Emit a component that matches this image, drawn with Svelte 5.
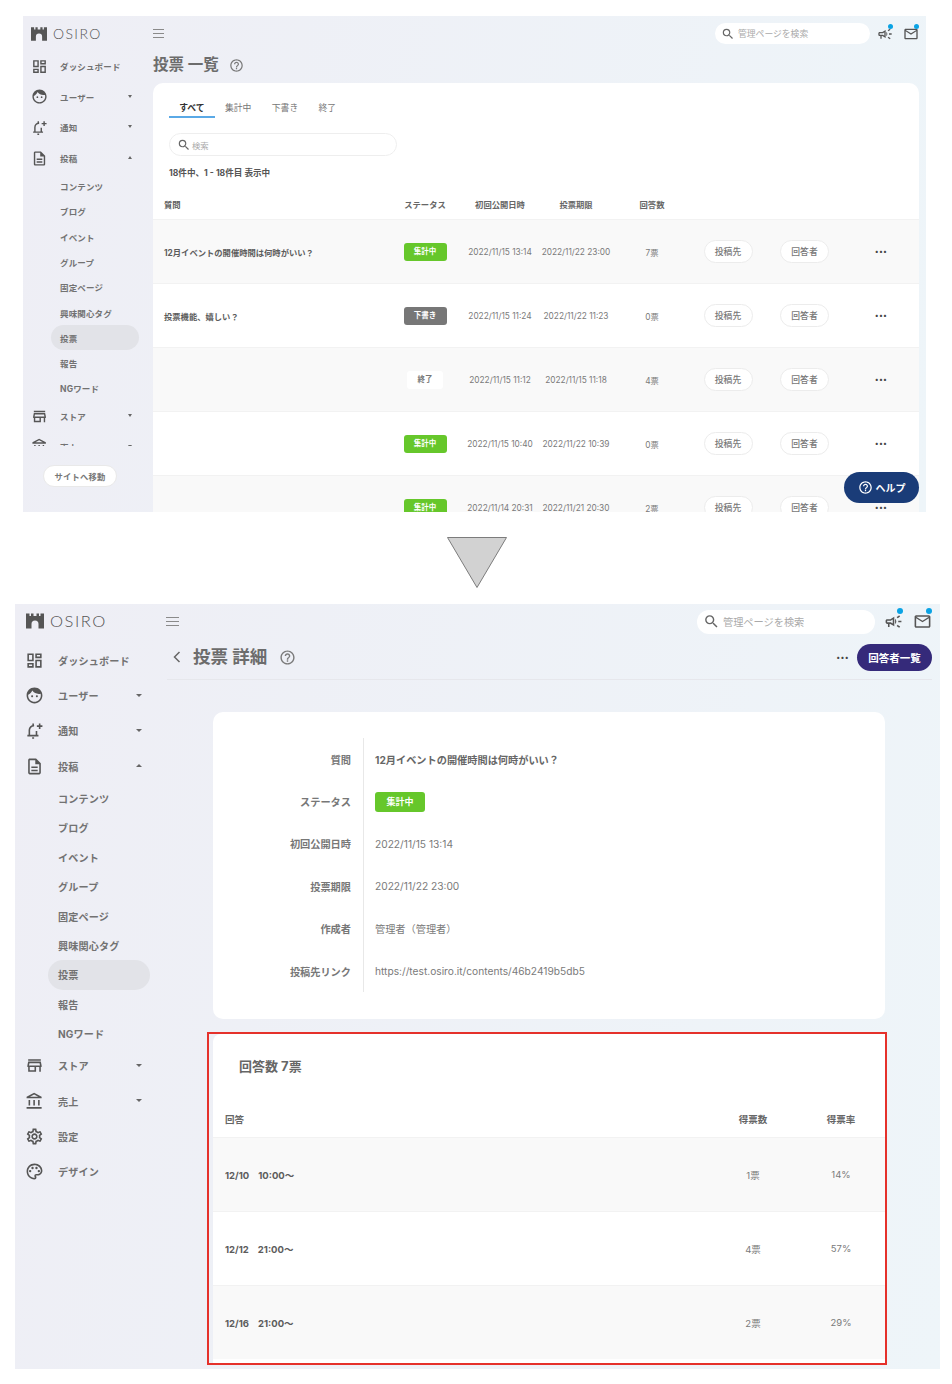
<script lang="ts">
  const paths: Record<string, string> = {
    dashboard: "M19 5v2h-4V5h4M9 5v6H5V5h4m10 8v6h-4v-6h4M9 17v2H5v-2h4M21 3h-8v6h8V3zM11 3H3v10h8V3zm10 8h-8v10h8V11zm-10 4H3v6h8v-6z",
    face: "M9 11.75c-.69 0-1.25.56-1.25 1.25s.56 1.25 1.25 1.25 1.25-.56 1.25-1.25-.56-1.25-1.25-1.25zm6 0c-.69 0-1.25.56-1.25 1.25s.56 1.25 1.25 1.25 1.25-.56 1.25-1.25-.56-1.25-1.25-1.25zM12 2C6.48 2 2 6.48 2 12s4.48 10 10 10 10-4.48 10-10S17.52 2 12 2zm0 18c-4.41 0-8-3.59-8-8 0-.29.02-.58.05-.86 2.36-1.05 4.23-2.98 5.21-5.37C11.07 8.33 14.05 10 17.42 10c.78 0 1.53-.09 2.25-.26.21.71.33 1.47.33 2.26 0 4.41-3.59 8-8 8z",
    doc: "M8 16h8v2H8zm0-4h8v2H8zm6-10H6c-1.1 0-2 .9-2 2v16c0 1.1.89 2 1.99 2H18c1.1 0 2-.9 2-2V8l-6-6zm4 18H6V4h7v5h5v11z",
    store: "M20 4H4v2h16V4zm1 10v-2l-1-5H4l-1 5v2h1v6h10v-6h4v6h2v-6h1zm-9 4H6v-4h6v4zm-6.96-6l.6-3h12.72l.6 3H5.04z",
    bank: "M6.5 10h-2v7h2v-7zm6 0h-2v7h2v-7zm8.5 9H2v2h19v-2zm-2.5-9h-2v7h2v-7zm-7-6.74L16.71 6H6.29l5.21-2.74m0-2.26L2 6v2h19V6l-9.5-5z",
    gear: "M19.43 12.98c.04-.32.07-.64.07-.98 0-.34-.03-.66-.07-.98l2.11-1.65c.19-.15.24-.42.12-.64l-2-3.46c-.09-.16-.26-.25-.44-.25-.06 0-.12.01-.17.03l-2.49 1c-.52-.4-1.08-.73-1.69-.98l-.38-2.65C14.46 2.18 14.25 2 14 2h-4c-.25 0-.46.18-.49.42l-.38 2.65c-.61.25-1.17.59-1.69.98l-2.49-1c-.06-.02-.12-.03-.18-.03-.17 0-.34.09-.43.25l-2 3.46c-.13.22-.07.49.12.64l2.11 1.65c-.04.32-.07.65-.07.98 0 .33.03.66.07.98l-2.11 1.65c-.19.15-.24.42-.12.64l2 3.46c.09.16.26.25.44.25.06 0 .12-.01.17-.03l2.49-1c.52.4 1.08.73 1.69.98l.38 2.65c.03.24.24.42.49.42h4c.25 0 .46-.18.49-.42l.38-2.65c.61-.25 1.17-.59 1.69-.98l2.49 1c.06.02.12.03.18.03.17 0 .34-.09.43-.25l2-3.46c.12-.22.07-.49-.12-.64l-2.11-1.65zm-1.98-1.71c.04.31.05.52.05.73 0 .21-.02.43-.05.73l-.14 1.13.89.7 1.08.84-.7 1.21-1.27-.51-1.04-.42-.9.68c-.43.32-.84.56-1.25.73l-1.06.43-.16 1.13-.2 1.35h-1.4l-.19-1.35-.16-1.13-1.06-.43c-.43-.18-.83-.41-1.23-.71l-.91-.7-1.06.43-1.27.51-.7-1.21 1.08-.84.89-.7-.14-1.13c-.03-.31-.05-.54-.05-.74s.02-.43.05-.73l.14-1.13-.89-.7-1.08-.84.7-1.21 1.27.51 1.04.42.9-.68c.43-.32.84-.56 1.25-.73l1.06-.43.16-1.13.2-1.35h1.39l.19 1.35.16 1.13 1.06.43c.43.18.83.41 1.23.71l.91.7 1.06-.43 1.27-.51.7 1.21-1.07.85-.89.7.14 1.13zM12 8c-2.21 0-4 1.79-4 4s1.79 4 4 4 4-1.79 4-4-1.79-4-4-4zm0 6c-1.1 0-2-.9-2-2s.9-2 2-2 2 .9 2 2-.9 2-2 2z",
    palette: "M12 22C6.49 22 2 17.51 2 12S6.49 2 12 2s10 4.04 10 9c0 3.31-2.69 6-6 6h-1.77c-.28 0-.5.22-.5.5 0 .12.05.23.13.33.41.47.64 1.06.64 1.67A2.5 2.5 0 0 1 12 22zm0-18c-4.41 0-8 3.59-8 8s3.59 8 8 8c.28 0 .5-.22.5-.5a.54.54 0 0 0-.14-.35c-.41-.46-.63-1.05-.63-1.65a2.5 2.5 0 0 1 2.5-2.5H16c2.21 0 4-1.79 4-4 0-3.86-3.59-7-8-7zM6.5 10a1.5 1.5 0 1 0 0 3 1.5 1.5 0 0 0 0-3zm3-4a1.5 1.5 0 1 0 0 3 1.5 1.5 0 0 0 0-3zm5 0a1.5 1.5 0 1 0 0 3 1.5 1.5 0 0 0 0-3zm3 4a1.5 1.5 0 1 0 0 3 1.5 1.5 0 0 0 0-3z",
    campaign: "M18 11v2h4v-2h-4zm-2 6.61c.96.71 2.21 1.65 3.2 2.39.4-.53.8-1.07 1.2-1.6-.99-.74-2.24-1.68-3.2-2.4-.4.54-.8 1.08-1.2 1.61zM20.4 5.6c-.4-.53-.8-1.07-1.2-1.6-.99.74-2.24 1.68-3.2 2.4.4.53.8 1.07 1.2 1.6.96-.72 2.21-1.65 3.2-2.4zM4 9c-1.1 0-2 .9-2 2v2c0 1.1.9 2 2 2h1v4h2v-4h1l5 3V6L8 9H4zm5.03 1.71L11 9.53v4.94l-1.97-1.18-.48-.29H4v-2h4.55l.48-.29zM15.5 12c0-1.33-.58-2.53-1.5-3.35v6.69c.92-.81 1.5-2.01 1.5-3.34z",
    mail: "M20 4H4c-1.1 0-1.99.9-1.99 2L2 18c0 1.1.9 2 2 2h16c1.1 0 2-.9 2-2V6c0-1.1-.9-2-2-2zm0 14H4V8l8 5 8-5v10zm-8-7L4 6h16l-8 5z",
    help: "M11 18h2v-2h-2v2zm1-16C6.48 2 2 6.48 2 12s4.48 10 10 10 10-4.48 10-10S17.52 2 12 2zm0 18c-4.41 0-8-3.59-8-8s3.59-8 8-8 8 3.59 8 8-3.59 8-8 8zm0-14c-2.21 0-4 1.79-4 4h2c0-1.1.9-2 2-2s2 .9 2 2c0 2-3 1.75-3 5h2c0-2.25 3-2.5 3-5 0-2.21-1.79-4-4-4z",
    search: "M15.5 14h-.79l-.28-.27A6.47 6.47 0 0 0 16 9.5 6.5 6.5 0 1 0 9.5 16c1.61 0 3.09-.59 4.23-1.57l.27.28v.79l5 4.99L20.49 19l-4.99-5zm-6 0C7.01 14 5 11.99 5 9.5S7.01 5 9.5 5 14 7.01 14 9.5 11.99 14 9.5 14z",
  };

  const mainTop = [
    { icon: "dashboard", label: "ダッシュボード" },
    { icon: "face", label: "ユーザー", caret: "down" },
    { icon: "bell", label: "通知", caret: "down" },
    { icon: "doc", label: "投稿", caret: "up" },
  ];
  const subs = ["コンテンツ", "ブログ", "イベント", "グループ", "固定ページ", "興味関心タグ", "投票", "報告", "NGワード"];
  const mainBottom = [
    { icon: "store", label: "ストア", caret: "down" },
    { icon: "bank", label: "売上", caret: "down" },
    { icon: "gear", label: "設定" },
    { icon: "palette", label: "デザイン" },
  ];

  const votes = [
    { q: "12月イベントの開催時間は何時がいい？", status: "集計中", kind: "live", from: "2022/11/15 13:14", to: "2022/11/22 23:00", n: "7票" },
    { q: "投票機能、嬉しい？", status: "下書き", kind: "draft", from: "2022/11/15 11:24", to: "2022/11/22 11:23", n: "0票" },
    { q: "", status: "終了", kind: "done", from: "2022/11/15 11:12", to: "2022/11/15 11:18", n: "4票" },
    { q: "", status: "集計中", kind: "live", from: "2022/11/15 10:40", to: "2022/11/22 10:39", n: "0票" },
    { q: "", status: "集計中", kind: "live", from: "2022/11/14 20:31", to: "2022/11/21 20:30", n: "2票" },
  ];

  const details = [
    { label: "ステータス", badge: true },
    { label: "初回公開日時", value: "2022/11/15 13:14" },
    { label: "投票期限", value: "2022/11/22 23:00" },
    { label: "作成者", value: "管理者（管理者）" },
    { label: "投稿先リンク", value: "https://test.osiro.it/contents/46b2419b5db5" },
  ];

  const answers = [
    { label: "12/10\u00a0\u00a0\u00a0\u00a010:00〜", n: "1票", rate: "14%" },
    { label: "12/12\u00a0\u00a0\u00a0\u00a021:00〜", n: "4票", rate: "57%" },
    { label: "12/16\u00a0\u00a0\u00a0\u00a021:00〜", n: "2票", rate: "29%" },
  ];
</script>

{#snippet icon(name, cls = "ico")}
  {#if name === "bell"}
    <svg class={cls} viewBox="0 0 24 24" fill="none" stroke="currentColor" stroke-width="2">
      <path d="M3 18.5h14M5.5 18.5v-7a5.5 5.5 0 0 1 6-5.4M14.500 18.500v-6M9 21.500h2.500M10.300 3v2.500M18.500 3v7M15 6.500h7" />
    </svg>
  {:else}
    <svg class={cls} viewBox="0 0 24 24" fill="currentColor"><path d={paths[name]} /></svg>
  {/if}
{/snippet}

{#snippet navItem(item)}
  <div class="nav-item">
    {@render icon(item.icon)}
    <span class="nav-label">{item.label}</span>
    {#if item.caret}<span class="caret {item.caret}"></span>{/if}
  </div>
{/snippet}

{#snippet sidebar(rest)}
  <div class="logo">
    <svg class="castle" viewBox="0 0 18 15" fill="currentColor">
      <path d="M0 0h3.500v2.500h1.500V0h2.500v2.500h3V0H13v2.500h1.500V0H18v15h-5.500v-4.500a3.500 3.500 0 0 0-7 0V15H0z" />
    </svg>
    <span class="wordmark">OSIRO</span>
  </div>
  <nav class="nav">
    {#each mainTop as item}
      {@render navItem(item)}
    {/each}
    <div class="subs">
      {#each subs as sub}
        <div class="sub" class:active={sub === "投票"}>{sub}</div>
      {/each}
    </div>
    {#each rest as item}
      {@render navItem(item)}
    {/each}
  </nav>
{/snippet}

{#snippet topbar()}
  <div class="topbar">
    <div class="burger"><i></i><i></i><i></i></div>
    <div class="global-search">
      {@render icon("search", "search-ico")}
      <span>管理ページを検索</span>
    </div>
    <div class="notify">{@render icon("campaign", "bar-ico")}<b></b></div>
    <div class="notify">{@render icon("mail", "bar-ico")}<b></b></div>
  </div>
{/snippet}

<div class="page">
  <section class="shot small">
    <aside class="side">
      {@render sidebar(mainBottom.slice(0, 2))}
      <button class="site-btn" type="button">サイトへ移動</button>
    </aside>
    <div class="main">
      {@render topbar()}
      <div class="title-row">
        <h1>投票 一覧</h1>
        {@render icon("help", "help-ico")}
      </div>
      <div class="card list">
        <div class="tabs">
          <span class="tab current">すべて</span>
          <span class="tab">集計中</span>
          <span class="tab">下書き</span>
          <span class="tab">終了</span>
        </div>
        <div class="list-search">
          {@render icon("search", "search-ico")}
          <span>検索</span>
        </div>
        <div class="count">18件中、1 - 18件目 表示中</div>
        <div class="vote-row head">
          <span class="q">質問</span>
          <span>ステータス</span>
          <span>初回公開日時</span>
          <span>投票期限</span>
          <span>回答数</span>
        </div>
        {#each votes as v}
          <div class="vote-row">
            <span class="q">{v.q}</span>
            <span><em class="badge {v.kind}">{v.status}</em></span>
            <span>{v.from}</span>
            <span>{v.to}</span>
            <span>{v.n}</span>
            <span><button class="pill" type="button">投稿先</button></span>
            <span><button class="pill" type="button">回答者</button></span>
            <span class="dots">•••</span>
          </div>
        {/each}
      </div>
    </div>
    <button class="help-btn" type="button">
      {@render icon("help", "help-btn-ico")}
      ヘルプ
    </button>
  </section>

  <svg class="arrow" viewBox="0 0 60 51">
    <path d="M0.500 0.500H59.500L30 50.500z" fill="#d2d2d2" stroke="#7c7c7c" />
  </svg>

  <section class="shot large">
    <aside class="side">
      {@render sidebar(mainBottom)}
    </aside>
    <div class="main">
      {@render topbar()}
      <div class="title-row detail-title">
        <svg class="back" viewBox="0 0 8 12" fill="none" stroke="currentColor" stroke-width="1.500"><path d="M6.500 1L1.500 6l5 5" /></svg>
        <h1>投票 詳細</h1>
        {@render icon("help", "help-ico")}
        <span class="dots">•••</span>
        <button class="respondents" type="button">回答者一覧</button>
      </div>

      <div class="card detail">
        <div class="detail-row">
          <div class="dt">質問</div>
          <div class="dd strong">12月イベントの開催時間は何時がいい？</div>
        </div>
        {#each details as d}
          <div class="detail-row">
            <div class="dt">{d.label}</div>
            <div class="dd">
              {#if d.badge}<em class="badge live">集計中</em>{:else}{d.value}{/if}
            </div>
          </div>
        {/each}
      </div>

      <div class="highlight">
        <div class="card result">
          <h2>回答数 7票</h2>
          <div class="answer-row head">
            <span class="a">回答</span>
            <span>得票数</span>
            <span>得票率</span>
          </div>
          {#each answers as a}
            <div class="answer-row">
              <span class="a">{a.label}</span>
              <span>{a.n}</span>
              <span>{a.rate}</span>
            </div>
          {/each}
        </div>
      </div>
    </div>
  </section>
</div>

<style>
  :global(body) {
    margin: 0;
    background: #fff;
  }

  .page {
    display: flex;
    flex-direction: column;
    width: 952px;
    height: 1384px;
    padding-top: 16px;
    box-sizing: border-box;
    color: #6e6e6e;
    font-family: Inter, "Noto Sans CJK JP", sans-serif;
  }

  .shot {
    position: relative;
    display: flex;
    overflow: hidden;
    background: linear-gradient(100deg, #eeeef5, #eef5f9);
  }

  .small {
    --side-w: 130px;
    --icon-x: 8px;
    --icon: 17px;
    --text-x: 12px;
    --caret-x: 105px;
    --caret: 2.5px;
    --item-h: 30.6px;
    --sub-h: 25.3px;
    --nav-fs: 8.5px;
    --pill-x: 28px;
    --pill-w: 88px;
    --pill-pad: 9px;
    --logo-h: 35px;
    --bar-search-w: 155px;
    --bar-search-h: 21px;
    --bar-fs: 8.8px;
    margin-left: 23px;
    width: 903px;
    height: 496px;
  }

  .large {
    --side-w: 151px;
    --icon-x: 10px;
    --icon: 19px;
    --text-x: 14px;
    --caret-x: 121px;
    --caret: 3px;
    --item-h: 35.3px;
    --sub-h: 29.4px;
    --nav-fs: 10.1px;
    --pill-x: 33px;
    --pill-w: 102px;
    --pill-pad: 10px;
    --logo-h: 38.6px;
    --bar-search-w: 178px;
    --bar-search-h: 24px;
    --bar-fs: 10.2px;
    margin-left: 15px;
    width: 925px;
    height: 765px;
  }

  /* sidebar */
  .side {
    flex: none;
    display: flex;
    flex-direction: column;
    width: var(--side-w);
  }

  .logo {
    flex: none;
    display: flex;
    align-items: center;
    gap: 6px;
    box-sizing: border-box;
    height: var(--logo-h);
    padding-left: 8px;
    color: #555;
  }

  .large .logo {
    padding-bottom: 4px;
    padding-left: 11px;
  }

  .castle {
    width: 16px;
    height: 14px;
  }

  .large .castle {
    width: 18px;
    height: 16px;
  }

  .wordmark {
    font-family: Lato, sans-serif;
    font-weight: 300;
    font-size: 14px;
    letter-spacing: 1.4px;
  }

  .large .wordmark {
    font-size: 16.5px;
    letter-spacing: 1.5px;
  }

  .nav {
    overflow: hidden;
  }

  .small .nav {
    flex: none;
    height: 395px;
  }

  .nav-item {
    position: relative;
    display: flex;
    align-items: center;
    height: var(--item-h);
    padding-left: var(--icon-x);
    color: #555;
  }

  .ico {
    flex: none;
    width: var(--icon);
    height: var(--icon);
  }

  .nav-label {
    margin-left: var(--text-x);
    color: #727272;
    font-size: var(--nav-fs);
    font-weight: 700;
    letter-spacing: 0.15px;
  }

  .caret {
    position: absolute;
    left: var(--caret-x);
    top: 50%;
    width: 0;
    height: 0;
    margin-top: -2px;
    border-left: var(--caret) solid transparent;
    border-right: var(--caret) solid transparent;
  }

  .caret.down {
    border-top: 3.5px solid #666;
  }

  .caret.up {
    border-bottom: 3.5px solid #666;
  }

  .subs {
    display: flex;
    flex-direction: column;
  }

  .sub {
    display: flex;
    align-items: center;
    box-sizing: border-box;
    width: var(--pill-w);
    height: var(--sub-h);
    margin-left: var(--pill-x);
    padding-left: var(--pill-pad);
    border-radius: 15px;
    color: #727272;
    font-size: var(--nav-fs);
    font-weight: 700;
    letter-spacing: 0.15px;
  }

  .sub.active {
    background: #e2e3e8;
  }

  .site-btn {
    align-self: flex-start;
    width: 74px;
    height: 22px;
    margin: 19px 0 0 20px;
    padding: 0;
    border: 1px solid #e9e9e9;
    border-radius: 11px;
    background: #fff;
    color: #777;
    font: 700 8.3px Inter, "Noto Sans CJK JP", sans-serif;
    letter-spacing: 0.2px;
  }

  /* top bar */
  .main {
    flex: 1;
    min-width: 0;
    display: flex;
    flex-direction: column;
  }

  .topbar {
    flex: none;
    display: flex;
    align-items: center;
    height: 35px;
  }

  .burger {
    display: flex;
    flex-direction: column;
    gap: 3px;
    width: 11px;
    margin-right: auto;
  }

  .burger i {
    height: 1px;
    background: #8a8a8a;
  }

  .large .burger {
    width: 13px;
  }

  .global-search {
    display: flex;
    align-items: center;
    gap: 3px;
    box-sizing: border-box;
    width: var(--bar-search-w);
    height: var(--bar-search-h);
    padding-left: 6px;
    border-radius: 12px;
    background: #fff;
    color: #aaa;
    font-size: var(--bar-fs);
  }

  .search-ico {
    flex: none;
    width: 14px;
    height: 14px;
    color: #666;
  }

  .large .search-ico {
    width: 17px;
    height: 17px;
  }

  .notify {
    position: relative;
    display: flex;
    color: #555;
  }

  .small .notify {
    margin-left: 7px;
  }

  .small .notify:last-child {
    margin-left: 10px;
    margin-right: 7px;
  }

  .large .notify {
    margin-left: 9px;
  }

  .large .notify:last-child {
    margin-left: 10px;
    margin-right: 8px;
  }

  .bar-ico {
    width: 16px;
    height: 16px;
  }

  .large .bar-ico {
    width: 19px;
    height: 19px;
  }

  .notify b {
    position: absolute;
    top: -2px;
    right: 0;
    width: 5px;
    height: 5px;
    border-radius: 50%;
    background: #0aa3e4;
  }

  .large .notify b {
    top: -4px;
    width: 6px;
    height: 6px;
  }

  /* title */
  .title-row {
    flex: none;
    display: flex;
    align-items: center;
    height: 26px;
    margin: 1px 0 5px;
    color: #7a7a7a;
  }

  h1 {
    margin: 0;
    color: #6c6c6c;
    font-size: 15.5px;
    font-weight: 700;
    line-height: 1;
  }

  .help-ico {
    width: 15px;
    height: 15px;
    margin-left: 10px;
  }

  .detail-title {
    height: 41px;
    margin: 0 8px 0 1px;
    padding-bottom: 4px;
    border-bottom: 1px solid #e6e7ec;
    box-sizing: border-box;
  }

  .detail-title h1 {
    margin-left: 12px;
    font-size: 17.5px;
  }

  .detail-title .help-ico {
    width: 17px;
    height: 17px;
    margin-left: 12px;
  }

  .back {
    width: 8px;
    height: 12px;
    margin-left: 6px;
    color: #666;
  }

  .detail-title .dots {
    margin-left: auto;
    margin-right: 8px;
    width: auto;
  }

  .respondents {
    width: 75px;
    height: 27px;
    padding: 0;
    border: 0;
    border-radius: 14px;
    background: #352a7a;
    color: #fff;
    font: 700 10.5px Inter, "Noto Sans CJK JP", sans-serif;
  }

  /* list card */
  .card {
    background: #fff;
    border-radius: 10px;
  }

  .list {
    flex: 1;
    margin-right: 7px;
    overflow: hidden;
    padding-top: 14px;
    border-bottom-left-radius: 0;
    border-bottom-right-radius: 0;
  }

  .tabs {
    display: flex;
    margin-left: 16px;
    font-size: 8.8px;
  }

  .tab {
    height: 21px;
    padding: 0 10.2px;
    box-sizing: border-box;
    line-height: 21px;
    color: #777;
  }

  .tab.current {
    border-bottom: 2px solid #5aa9e6;
    color: #333;
    font-weight: 700;
  }

  .list-search {
    display: flex;
    align-items: center;
    gap: 1px;
    box-sizing: border-box;
    width: 228px;
    height: 23px;
    margin: 15px 0 0 16px;
    padding-left: 7px;
    border: 1px solid #eeeeee;
    border-radius: 12px;
    color: #aaa;
    font-size: 8.4px;
  }

  .count {
    height: 17px;
    margin: 9px 0 0 16px;
    color: #555;
    font-size: 8.6px;
    font-weight: 700;
    line-height: 17px;
  }

  .vote-row {
    display: grid;
    grid-template-columns: 235px 74px 76px 76px 76px 76px 77px 76px;
    align-items: center;
    box-sizing: border-box;
    height: 64px;
    border-top: 1px solid #f2f2f2;
    color: #7a7a7a;
    font-size: 8.3px;
    text-align: center;
  }

  .vote-row:nth-child(odd) {
    background: #f9f9f9;
  }

  .vote-row .q {
    padding-left: 11px;
    color: #5c5c5c;
    font-weight: 700;
    text-align: left;
  }

  .vote-row.head {
    height: 37px;
    padding-top: 6px;
    border-top: 0;
    background: #fff;
    color: #666;
    font-weight: 700;
  }

  .badge {
    display: inline-block;
    box-sizing: border-box;
    width: 43px;
    height: 18px;
    border-radius: 3px;
    font-size: 7.5px;
    font-style: normal;
    font-weight: 700;
    line-height: 18px;
    text-align: center;
    vertical-align: middle;
  }

  .badge.live {
    background: #66c72b;
    color: #fff;
  }

  .badge.draft {
    background: #777;
    color: #fff;
  }

  .badge.done {
    width: 36px;
    background: #fff;
    color: #777;
  }

  .pill {
    width: 49px;
    height: 23px;
    padding: 0;
    border: 1px solid #ececec;
    border-radius: 12px;
    background: #fff;
    color: #777;
    font: 500 8.8px Inter, "Noto Sans CJK JP", sans-serif;
  }

  .dots {
    color: #444;
    font-size: 7px;
    letter-spacing: 0.3px;
  }

  .help-btn {
    position: absolute;
    right: 7px;
    bottom: 9px;
    display: flex;
    align-items: center;
    justify-content: center;
    gap: 3px;
    width: 75px;
    height: 31px;
    padding: 0;
    border: 0;
    border-radius: 16px;
    background: #1a3c78;
    color: #fff;
    font: 700 10px Inter, "Noto Sans CJK JP", sans-serif;
  }

  .help-btn-ico {
    width: 15px;
    height: 15px;
  }

  .arrow {
    flex: none;
    align-self: flex-start;
    width: 60px;
    height: 51px;
    margin: 25px 0 16px 447px;
  }

  /* detail card */
  .detail {
    width: 672px;
    height: 307px;
    margin: 32px 0 13px 47px;
    padding-top: 26px;
    box-sizing: border-box;
  }

  .detail-row {
    display: grid;
    grid-template-columns: 150px 1fr;
    height: 42.4px;
    align-items: stretch;
    font-size: 10.2px;
  }

  .dt {
    display: flex;
    align-items: center;
    justify-content: flex-end;
    padding-right: 12px;
    color: #777;
    font-weight: 700;
  }

  .dd {
    display: flex;
    align-items: center;
    padding-left: 11px;
    border-left: 1px solid #e8e8e8;
    color: #7a7a7a;
  }

  .dd.strong {
    color: #666;
    font-weight: 700;
  }

  .detail .badge {
    width: 50px;
    height: 20px;
    font-size: 9px;
    line-height: 20px;
  }

  /* result card */
  .highlight {
    box-sizing: border-box;
    width: 680px;
    height: 333px;
    margin-left: 41px;
    padding: 0 0 0 4px;
    border: 2px solid #e5312b;
  }

  .result {
    height: 329px;
    overflow: hidden;
    border-radius: 8px 0 0 0;
  }

  h2 {
    margin: 0;
    height: 72px;
    padding: 24px 0 0 26px;
    box-sizing: border-box;
    color: #666;
    font-size: 13px;
    font-weight: 700;
    line-height: 16px;
  }

  .answer-row {
    display: grid;
    grid-template-columns: 496px 88px 88px;
    align-items: center;
    box-sizing: border-box;
    height: 74px;
    border-top: 1px solid #f2f2f2;
    color: #7a7a7a;
    font-size: 9.5px;
    text-align: center;
  }

  .answer-row:nth-of-type(even) {
    background: #f9f9f9;
  }

  .answer-row.head {
    height: 31px;
    padding-bottom: 6px;
    border-top: 0;
    background: #fff;
    color: #666;
    font-weight: 700;
  }

  .answer-row .a {
    padding-left: 12px;
    color: #5c5c5c;
    font-weight: 700;
    text-align: left;
  }

  .answer-row.head .a {
    color: #666;
  }
</style>
